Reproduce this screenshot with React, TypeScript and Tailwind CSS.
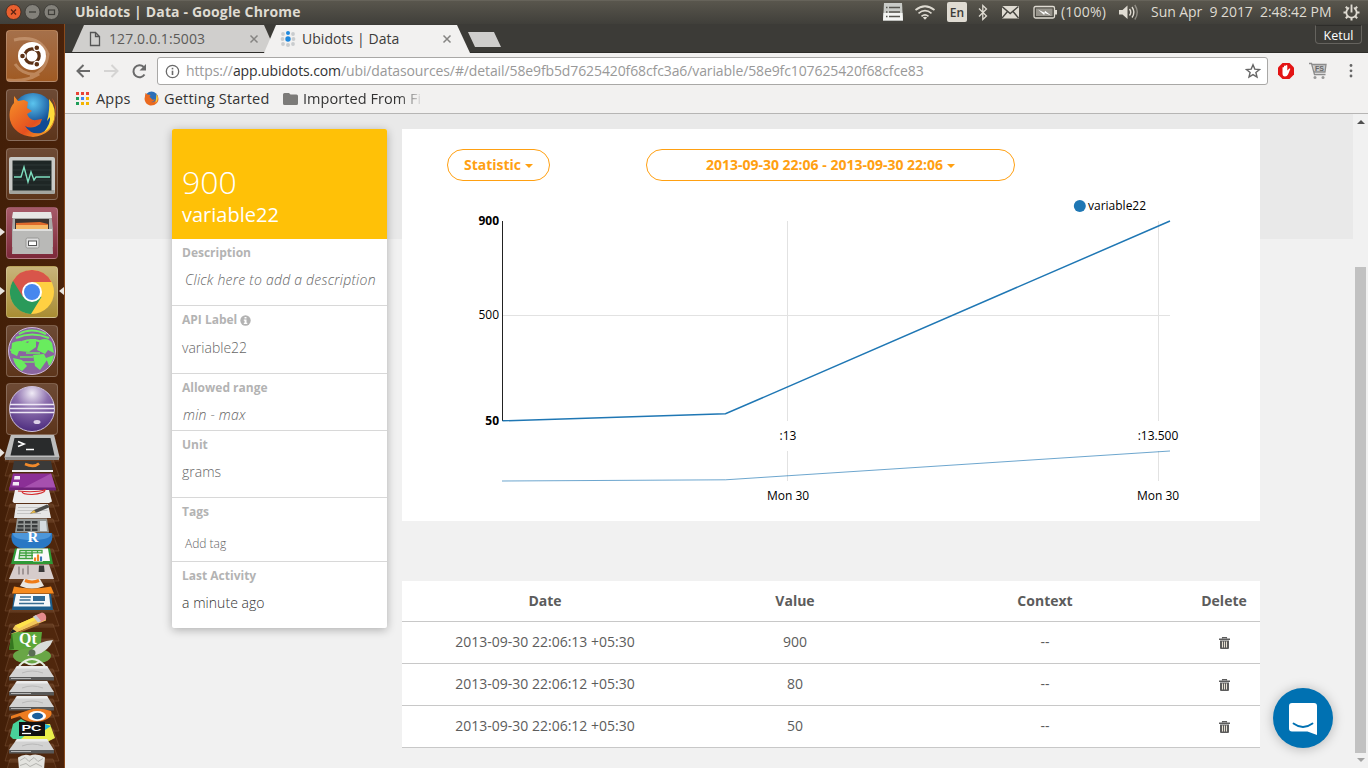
import React from "react";

const UI = "font-['Open_Sans','Noto_Sans',sans-serif]";

/* ---------- top panel ---------- */

function WindowButtons() {
  return (
    <svg className="ml-[5px] h-6 w-[56px] shrink-0" viewBox="0 0 56 24">
      <circle cx="8.5" cy="11" r="7.5" fill="#e9602f" stroke="#3a2a22" strokeWidth=".8" />
      <path d="M6 8.5l5 5M11 8.5l-5 5" stroke="#5b2413" strokeWidth="1.3" />
      <circle cx="27.5" cy="11" r="7.5" fill="#83817a" stroke="#383733" strokeWidth=".8" />
      <path d="M24 11h7" stroke="#3f3e39" strokeWidth="1.3" />
      <circle cx="46.5" cy="11" r="7.5" fill="#83817a" stroke="#383733" strokeWidth=".8" />
      <rect x="43.5" y="9" width="6" height="4.5" fill="none" stroke="#3f3e39" strokeWidth="1.2" />
    </svg>
  );
}

function TopPanel() {
  return (
    <header className="flex h-6 shrink-0 items-center border-t border-[#66635a] bg-linear-to-b from-[#59564d] to-[#403f3a] text-[#dfdbd2]">
      <WindowButtons />
      <div className="ml-[14px] w-[240px] pb-[2px] text-[14px] leading-[20px] font-bold tracking-[0.15px] whitespace-nowrap">
        Ubidots | Data - Google Chrome
      </div>
      <svg className="ml-auto h-6 w-[120px] shrink-0" viewBox="882 0 120 24">
        <path d="M884 2h18l1 17.5h-20z" fill="#c9cbc7" />
        <path d="M883.5 12h19l.5 7.5h-20z" fill="#f4f5f3" />
        <path d="M889 6.500h11M889 11h11M889 15.500h11" stroke="#55544e" strokeWidth="1.3" />
        <path d="M886 6.500h1.5M886 11h1.5M886 15.500h1.5" stroke="#55544e" strokeWidth="1.6" />
        <g fill="none" stroke="#dfdbd2" strokeWidth="1.7">
          <path d="M915.5 9q9.500-7.500 19 0" />
          <path d="M918.5 12.300q6.500-5.200 13 0" />
          <path d="M921.5 15.300q3.500-2.800 7 0" />
        </g>
        <path d="M925 18.800l-2.200-2.300q2.200-1.500 4.400 0z" fill="#dfdbd2" />
        <rect x="947" y="1" width="20" height="20" rx="2" fill="#dfdbd2" />
        <text x="957" y="16" textAnchor="middle" className="fill-[#3c3b37] font-['Open_Sans'] text-[12px] font-semibold">En</text>
        <path d="M979 7.500l7.500 7.500-3.700 3.500v-14l3.700 3.500-7.500 7.500" fill="none" stroke="#dfdbd2" strokeWidth="1.300" />
      </svg>
      <svg className="h-6 w-[58px] shrink-0" viewBox="1002 0 58 24">
        <rect x="1001.5" y="5" width="17.500" height="12.500" fill="#dfdbd2" />
        <path d="M1002 5.500l8.200 7 8.200-7M1002 17l5.500-6.500M1018.500 17l-5.500-6.500" fill="none" stroke="#45443f" strokeWidth="1.400" />
        <rect x="1034" y="5.500" width="20.500" height="11.500" rx="1.500" fill="none" stroke="#dfdbd2" strokeWidth="1.300" />
        <rect x="1036" y="7.500" width="16.500" height="7.500" fill="#96938b" />
        <path d="M1055 9h2v4.500h-2z" fill="#dfdbd2" />
        <path d="M1038 8.500l6.500 3.200.5-2 6 4.800-6.200-2.600-.6 2z" fill="#fff" />
      </svg>
      <div className="w-[58px] pb-[2px] pl-px text-[14px] leading-[20px] tracking-[0.2px] whitespace-nowrap">(100%)</div>
      <svg className="h-6 w-[33px] shrink-0" viewBox="1118 0 33 24">
        <path d="M1119 9h3.500l5-4.500v13.500l-5-4.500h-3.500z" fill="#dfdbd2" />
        <g fill="none" stroke="#dfdbd2" strokeWidth="1.400">
          <path d="M1129.500 8q2.500 3.300 0 6.500" />
          <path d="M1132 6q3.800 5.200 0 10.500" />
          <path d="M1134.800 4q5 7.200 0 14.500" opacity=".45" />
        </g>
      </svg>
      <div className="w-[192px] pb-[2px] text-[14px] leading-[20px] tracking-[-0.05px] whitespace-pre">Sun Apr  9 2017  2:48:42 PM</div>
      <svg className="mr-2 h-6 w-[17px] shrink-0" viewBox="1343 0 17 24">
        <circle cx="1351.500" cy="11.500" r="5.200" fill="none" stroke="#dfdbd2" strokeWidth="1.800" />
        <path d="M1343.500 11.500h2.500M1357 11.500h2.500M1351.500 17v2.500M1345.800 5.800l2 2M1357.200 5.800l-2 2M1345.800 17.200l2-2M1357.200 17.200l-2-2" stroke="#dfdbd2" strokeWidth="2" />
        <path d="M1351.500 3.500v8" stroke="#47453f" strokeWidth="4.500" />
        <path d="M1351.500 3.500v8" stroke="#dfdbd2" strokeWidth="1.900" />
      </svg>
    </header>
  );
}

/* ---------- launcher ---------- */

function Tile({ tone, children, before, after }: { tone: string; children: React.ReactNode; before?: boolean; after?: boolean }) {
  return (
    <div className="relative flex h-[52px] w-[65px] shrink-0 justify-center pr-px">
      <div className={"h-[52px] w-[52px] rounded border border-white/20 bg-linear-to-b " + tone}>
        <svg className="h-[50px] w-[50px]" viewBox="1 1 50 50">{children}</svg>
      </div>
      {before && <span className="absolute top-[21px] left-0 border-y-4 border-l-[5px] border-y-transparent border-l-[#e8e4df]" />}
      {after && <span className="absolute top-[21px] right-px border-y-4 border-r-[5px] border-y-transparent border-r-[#e8e4df]" />}
    </div>
  );
}

function Ghosts() {
  const ys = Array.from({ length: 22 }, (_, i) => 12 + i * 15);
  return (
    <g>
      {ys.map((y) => (
        <g key={y}>
          <path d={`M10 ${y - 2}h43l6 17h-54z`} fill="#5f3517" fillOpacity=".3" stroke="#a07a5c" strokeOpacity=".35" strokeWidth=".8" />
          <path d={`M10 ${y - 2}h43l1.500 4h-46z`} fill="#93694a" fillOpacity=".2" />
        </g>
      ))}
    </g>
  );
}

function Drive({ y }: { y: number }) {
  return (
    <g>
      <path d={`M17 ${y}h30l7 11v3h-45v-3z`} fill="#d2d2d2" />
      <path d={`M9 ${y + 11}h45v3.500h-45z`} fill="#585858" />
      <path d={`M11 ${y + 12.500}h20`} stroke="#b5b5b5" />
      <path d={`M17 ${y}h30l1.500 2.500h-33.500z`} fill="#ebebeb" />
      <path d={`M22 ${y + 7}q10-4 21 0`} fill="none" stroke="#b9b9b9" />
    </g>
  );
}

function FoldedStack() {
  return (
    <svg className="h-[336px] w-[65px] shrink-0" viewBox="0 0 65 336">
      <Ghosts />
      {/* terminal */}
      <g transform="translate(0 -1)">
        <path d="M11 1.500h43l5.500 22.500-1 3h-53l-1-3z" fill="#bdbdbd" />
        <path d="M5 24h54l-1 3h-52z" fill="#8b8b8b" />
        <path d="M14.500 5h36l4 17.500h-44z" fill="#292b2c" />
        <path d="M18 8.500l6 2.500-6 2.500M26 16.500h8" stroke="#fff" strokeWidth="1.600" fill="none" />
      </g>
      <path d="M0 14.500l4.500 4.200L0 23z" fill="#e8e4df" />
      {/* sublime */}
      <g transform="translate(0 -2)">
        <path d="M14 29h37l2 10h-41z" fill="#3b3a39" />
        <path d="M25 32q9 4 14-.5" stroke="#f18a2b" strokeWidth="2.500" fill="none" />
        <path d="M12 38h41v2h-41z" fill="#eee" />
      </g>
      {/* workspaces */}
      <g transform="translate(0 -3)">
        <path d="M13 42.500h38l5 16h-47z" fill="#8b2f96" />
        <path d="M51 42.500l5 16h-36z" fill="#a650ae" />
        <path d="M9 56.500h47v3h-47z" fill="#6f2279" />
        <path d="M14.500 45h5.500v3.500h-6zM13 51h6v3.500h-6.500z" fill="#f4e9f6" />
      </g>
      {/* document viewer */}
      <g transform="translate(0 -3.5)">
        <path d="M15 59.500h34l3 11.500-3 1.500h-35l-1.500-1.500z" fill="#eee" />
        <path d="M18 60.500q18 2 28-1.500M22 61q0 3 10 3 12-1 13-4" stroke="#d42a2c" strokeWidth="1.200" fill="none" />
      </g>
      {/* text editor */}
      <g transform="translate(0 -4.5)">
        <path d="M16 74.500h32l3 14h-37z" fill="#e6e6e6" />
        <path d="M18 78h28M17.500 81h30M17 84h24" stroke="#c5c5c5" />
        <path d="M30 84l4-3.500 13-5.500 3 2.500-13 5.500z" fill="#4c4c49" />
        <path d="M30 84l4-3.500 2 2.500z" fill="#e6b94c" />
      </g>
      {/* calculator */}
      <g transform="translate(0 -4.5)">
        <path d="M17 89h30l2 14h-34z" fill="#969a98" />
        <path d="M18.500 91.500h5v2.500h-5.500zM25 91.500h5.500v2.500h-5.500zM32 91.500h5.500v2.500h-5.500zM17.500 95.500h6v2.500h-6zM25 95.500h5.500v2.500h-5.500zM32 95.500h5.500v2.500h-5.500zM17 99h6.500v2.500h-6.500zM25 99h5.500v2.500h-5.500zM32 99h5.500v2.500h-5.500z" fill="#3a3d3d" />
        <path d="M40 91.500h6l1 10h-7z" fill="#d4dbe0" />
      </g>
      {/* r studio */}
      <path d="M12 99h40q3 16.500-20.500 16.500T12 99z" fill="#2a78c4" />
      <path d="M13 99h38q1 7-19 7t-19-7z" fill="#4d97da" />
      <text x="33" y="108" textAnchor="middle" className="fill-white font-['Liberation_Serif'] text-[15px] font-bold">R</text>
      {/* calc */}
      <g transform="translate(0 -7.5)">
        <path d="M15 122h35l3 15.500h-42z" fill="#2e9a36" />
        <path d="M17 122h31l2 12.500h-36z" fill="#fafafa" />
        <path d="M20 124h22v8h-23zM20 126.500h22M19.500 129h22M26 124v8M32 124v8M37.500 124v8" fill="none" stroke="#3fa13f" strokeWidth="1.300" />
        <path d="M33 127h10v8h-10z" fill="#fff" />
        <path d="M35 131v3.500M38 128v6.500" stroke="#f08424" strokeWidth="2.200" />
        <path d="M41 130v4.500" stroke="#3b76b5" strokeWidth="2.200" />
      </g>
      {/* system settings */}
      <g transform="translate(0 -8.5)">
        <path d="M15 139h34l5 14.500h-45z" fill="#d6cccb" />
        <path d="M19 141v8M23 143v6M28 140v9" stroke="#6b6161" />
        <path d="M39 140h5l.6 6.500h-6z" fill="#393838" />
      </g>
      {/* vlc */}
      <g transform="translate(0 -6.5)">
        <path d="M14 159q18 4 37 0l3 7h-42z" fill="#f58b1f" />
        <path d="M24 151.500h16l4 7q-12 5-24 0z" fill="#e9e5df" />
        <path d="M25 153q7 3 14 0" stroke="#ef7c18" strokeWidth="3" fill="none" />
      </g>
      {/* writer */}
      <g transform="translate(0 -7)">
        <path d="M14 167h37l2 16h-41z" fill="#1d5e8c" />
        <path d="M16 167h33l1.500 12.500h-37z" fill="#f5f8fa" />
        <path d="M20 170h11M19.500 173h11M19 176.500h25" stroke="#3a6d91" strokeWidth="1.300" />
        <path d="M33 169h12v5h-12z" fill="#316a93" />
      </g>
      {/* qt */}
      <path d="M12 198h30l-2 18h-31z" fill="#5ca63a" />
      <path d="M12 198l2 17-5 1z" fill="#35761f" />
      <text x="28" y="209.500" textAnchor="middle" className="fill-white font-['Liberation_Serif'] text-[16px] font-bold">Qt</text>
      {/* pencil */}
      <g transform="translate(0 -5.5)">
        <path d="M9 206l6-9 25-11q6 0 6 6l-27 11z" fill="#f2c75a" />
        <path d="M15 197l25-11 2 2-23 12z" fill="#ffe44b" />
        <path d="M35 187l7-3q5 1 4 7l-6 3z" fill="#e48b8c" />
        <path d="M33 188l3-1.500 5 6-3 1.500z" fill="#c9cbd0" />
        <path d="M9 206l3.500-5.500 4 2.500z" fill="#222" />
        <path d="M19 203l19-8.500 1 2-19 7.500z" fill="#a9702c" />
      </g>
      {/* green pen */}
      <g transform="translate(0 -7)">
        <ellipse cx="32" cy="229" rx="19" ry="8" fill="#69a646" />
        <path d="M19 239q13-14 26 0M25 235q7 5 14 0" stroke="#e6eee2" strokeWidth="2" fill="none" />
        <path d="M27 229l6-7q6-8 20-9-4 11-17 15z" fill="#dadcd8" />
        <circle cx="32" cy="226" r="3.500" fill="#5a6d55" />
      </g>
      <Drive y={232} /><Drive y={247} /><Drive y={262} />
      {/* blender */}
      <g transform="translate(0 -4)">
        <path d="M11 286l18-6q10-3 22 1 3 6-9 10-16 3-22-5l-9 3z" fill="#ee7d21" />
        <ellipse cx="37" cy="286" rx="9" ry="5" fill="#fff" />
        <ellipse cx="37.500" cy="286" rx="5.500" ry="3.200" fill="#1b5e9c" />
      </g>
      {/* pycharm */}
      <g transform="translate(0 -5)">
        <path d="M13 295l8-5 33 18-3 3-38-1-3-3z" fill="#48d39a" />
        <path d="M38 295h12l5 14-8 4-26-3z" fill="#e9ee4b" />
        <path d="M45 295l6 2-6 4z" fill="#22b8e0" />
        <path d="M19 293h26v14h-26z" fill="#111" />
        <text x="21.500" y="301.500" className="fill-white font-['Liberation_Sans'] text-[9px] font-bold" textLength="20" lengthAdjust="spacingAndGlyphs">PC</text>
        <path d="M22 304.500h9" stroke="#fff" strokeWidth="1.300" />
      </g>
      <Drive y={305} />
      {/* trash */}
      <g transform="translate(0 -6.5)">
        <path d="M18 330q6-4 12-2 7-3 15 2l-1 12h-25z" fill="#e3e3df" />
        <path d="M20 333l5-3 4 4 5-4 4 4 5-3M20 338l6-2 4 3 6-3 6 3" fill="none" stroke="#b4b4b0" />
      </g>
    </svg>
  );
}

function Launcher() {
  return (
    <aside className="flex w-[65px] shrink-0 flex-col overflow-hidden border-r border-[#8a4a1c] bg-linear-to-r from-[#431f08] to-[#4a220a] pt-1.5">
      <div className="flex flex-col gap-[7px] [&>*:last-child]:-mt-px">
        <Tile tone="from-[#a5704a] to-[#a05a22]">
          <path d="M8 10q25-6 34 14-2 18-18 22M1 50q20 2 32-6-16 2-24-10" fill="none" stroke="#dfb896" strokeOpacity=".45" strokeWidth="3" />
          <circle cx="26" cy="26" r="14" fill="#fff" />
          <circle cx="26" cy="26" r="7.200" fill="none" stroke="#5b3115" strokeWidth="3.200" />
          <g fill="#5b3115" stroke="#fff" strokeWidth="1.200"><circle cx="16.500" cy="26" r="2.900" /><circle cx="30.800" cy="17.800" r="2.900" /><circle cx="30.800" cy="34.200" r="2.900" /></g>
        </Tile>
        <Tile tone="from-[#6d4a35] to-[#5d351b]">
          <defs>
            <radialGradient id="globe" cx=".5" cy=".25"><stop stopColor="#5bc4ee" /><stop offset="1" stopColor="#114a94" /></radialGradient>
            <linearGradient id="fox" x2="1" y2="1"><stop stopColor="#f79329" /><stop offset=".6" stopColor="#e4501f" /><stop offset="1" stopColor="#f8c02c" /></linearGradient>
          </defs>
          <circle cx="27" cy="25" r="21" fill="url(#globe)" />
          <path d="M8 7l4 5 6-1 4 2-1 6 5 3-5 3q3 7 9 6l6-1-2 5q-8 6-15 2 6 9 16 7 12-4 14-17 2-9-3-18 6 8 3 20-3 17-22 19Q8 46 4 31 2 20 8 14z" fill="url(#fox)" />
          <path d="M43 10q8 9 5 21-3 9-10 12 7-9 6-15l-3 4q3-11 2-22z" fill="#ffdc3a" />
        </Tile>
        <Tile tone="from-[#6d4a35] to-[#5d351b]">
          <rect x="3" y="9" width="46" height="37" rx="2" fill="#c9cac7" /><rect x="3.500" y="42" width="45" height="4" fill="#a3a49f" />
          <rect x="6.500" y="12.500" width="39" height="30" fill="#1e2625" />
          <path d="M7 17h38M7 22h38M7 27h38M7 32h38M7 37h38" stroke="#35403e" strokeWidth=".7" />
          <path d="M8 29h7l3-10 4 15 3-10 3 8 2-3h14" fill="none" stroke="#7fe0c0" strokeWidth="1.400" />
        </Tile>
        <Tile tone="from-[#a65a68] to-[#7c2839]" before>
          <path d="M7 5h38l2 17v18h-41v-18z" fill="#a9a9a7" /><path d="M7 5h38l1 6h-40z" fill="#e6e6e4" />
          <path d="M9 12h34v14h-34z" fill="#3b332f" /><path d="M10 16l24-1 8 2v8h-32z" fill="#df6a2b" /><path d="M10 18h32v6h-32z" fill="#f5b765" />
          <path d="M7 22h39l1 25h-41z" fill="#b9b9b7" /><path d="M7 22h39v2h-39z" fill="#dededc" />
          <rect x="20" y="31" width="13" height="10" rx="1.500" fill="#ddd" stroke="#969694" /><rect x="22.500" y="34" width="8" height="4.500" fill="#fff" stroke="#555" />
        </Tile>
        <Tile tone="from-[#c8b47a] to-[#a98d32]" before after>
          <circle cx="26" cy="26" r="22" fill="#ffd042" />
          <path d="M7 14.800A22 22 0 0 0 25 48l10.500-17L26 26z" fill="#2a9a5a" />
          <path d="M7 14.800A22 22 0 0 1 45.500 16H26v10l-9 5z" fill="#d8554a" />
          <circle cx="26" cy="26" r="10" fill="#fff" /><circle cx="26" cy="26" r="8" fill="#4787ee" />
        </Tile>
        <Tile tone="from-[#6d4a35] to-[#5d351b]">
          <circle cx="26" cy="26" r="23.500" fill="#8a65a0" stroke="#cfb9dc" />
          <path d="M13 9q12-7 27 0M10 13q16-7 33 0M16 17q10-4 20 0" stroke="#6dee62" strokeWidth="2" fill="none" />
          <path d="M6 18q8-4 16 0l2-4h6v8l-7 5-10-1-2 5-6-3zM34 15q8-3 12 3l2 10-6-3-3 4-8-4zM7 33l9 2 5 6-5 5q-7-4-9-13zM27 30l11-1 3 6-7 10-5-4zM40 33l8-3q-1 7-5 11z" fill="#69ec5e" />
          <path d="M4 25h9M20 28h14M16 37h12M14 32h13" stroke="#69ec5e" strokeWidth="1.500" />
        </Tile>
        <Tile tone="from-[#6d4a35] to-[#5d351b]">
          <defs><radialGradient id="orb" cx=".5" cy=".15" r=".9"><stop stopColor="#f0ebf6" /><stop offset=".4" stopColor="#8d70ae" /><stop offset="1" stopColor="#462579" /></radialGradient></defs>
          <circle cx="26" cy="26" r="22.500" fill="url(#orb)" stroke="#cfc2dd" />
          <path d="M4 21.500h44M4 25.500h44M4 29.500h44" stroke="#eee8f5" strokeWidth="1.300" />
          <ellipse cx="31" cy="39" rx="3.500" ry="2" fill="#dcd0e8" />
        </Tile>
      </div>
      <div className="-mt-px flex"><FoldedStack /></div>
    </aside>
  );
}

/* ---------- browser chrome ---------- */

function TabStrip() {
  return (
    <div className="flex h-[29px] shrink-0 items-end border-b border-[#2e2d2a] bg-[#3c3b37] pl-[7px]">
      <div className="flex h-[27px] w-[204px] items-center bg-[#d0cfcd] pr-4 pl-[17px] text-[#5c5b59] [clip-path:polygon(12px_0,192px_0,204px_100%,0_100%)]">
        <svg className="h-4 w-3" viewBox="0 0 12 16"><path d="M1.500 1.500h5l4 4v9h-9zM6.500 1.500v4h4" fill="none" stroke="#555" strokeWidth="1.300" /></svg>
        <span className="ml-[8px] text-[14px] tracking-[0.1px]">127.0.0.1:5003</span>
        <svg className="mr-px ml-auto h-2.5 w-2.5" viewBox="0 0 10 10"><path d="M1.500 1.500l7 7M8.500 1.500l-7 7" stroke="#858482" strokeWidth="1.500" /></svg>
      </div>
      <div className="-mb-px -ml-[12px] flex h-[28px] w-[206px] items-center bg-[#f2f1f0] pr-4 pl-[16px] text-[#3c3b39] [clip-path:polygon(12px_0,193px_0,206px_100%,0_100%)]">
        <svg className="h-4 w-4" viewBox="0 0 16 16">
          <g fill="#c9ccce"><circle cx="3" cy="3" r="1.900" /><circle cx="13" cy="3" r="1.900" /><circle cx="2.500" cy="8" r="1.900" /><circle cx="13.500" cy="8" r="1.900" /><circle cx="3" cy="13" r="1.900" /><circle cx="8" cy="14" r="2" /><circle cx="13" cy="13" r="1.900" /></g>
          <circle cx="8" cy="2" r="2" fill="#1e88dd" /><circle cx="8" cy="8" r="2.700" fill="#1e88dd" />
        </svg>
        <span className="ml-[6px] pb-px text-[14px] tracking-[0.05px]">Ubidots | Data</span>
        <svg className="mr-[2px] ml-auto h-2.5 w-2.5" viewBox="0 0 10 10"><path d="M1.500 1.500l7 7M8.500 1.500l-7 7" stroke="#858482" strokeWidth="1.500" /></svg>
      </div>
      <div className="mb-[5px] -ml-[2px] h-[15px] w-[33px] bg-[#cfcecc] [clip-path:polygon(0_0,26px_0,100%_100%,7px_100%)]" />
      <div className="mr-[6px] mb-[8px] ml-auto flex h-[19px] w-[47px] items-center justify-center rounded-b border border-t-[#2e2d2a] border-[#65635e] pt-[2px] text-white">
        <span className="text-[12.5px] leading-4">Ketul</span>
      </div>
    </div>
  );
}

function AddressBar() {
  return (
    <div className="flex h-[36px] shrink-0 items-center bg-[#f2f1f0] pl-[10px]">
      <svg className="h-5 w-[82px] shrink-0" viewBox="75 61 82 20">
        <path d="M90 71H78M83.500 65l-6 6 6 6" fill="none" stroke="#6a6a6a" strokeWidth="2" />
        <path d="M104 71h12M111.500 65l6 6-6 6" fill="none" stroke="#d5d4d3" strokeWidth="2" />
        <path d="M144.500 74.500a6 6 0 1 1-.8-7.500" fill="none" stroke="#6a6a6a" strokeWidth="2" />
        <path d="M146 64v6.500h-6.500z" fill="#6a6a6a" />
      </svg>
      <div className="flex h-[28px] w-[1111px] items-center rounded-[3px] border border-[#a9a8a6] bg-white pr-[6px] pl-[7px]">
        <svg className="h-[15px] w-[15px]" viewBox="0 0 15 15"><circle cx="7.500" cy="7.500" r="6.200" fill="none" stroke="#6a6a6a" strokeWidth="1.300" /><path d="M7.500 6.700v4.300" stroke="#6a6a6a" strokeWidth="1.600" /><path d="M7.500 3.800v1.600" stroke="#6a6a6a" strokeWidth="1.600" /></svg>
        <span className="ml-[6px] pb-[2px] text-[14px] tracking-[-0.11px] whitespace-nowrap text-[#999]">
          https://<span className="text-[#333]">app.ubidots.com</span>/ubi/datasources/#/detail/58e9fb5d7625420f68cfc3a6/variable/58e9fc107625420f68cfce83
        </span>
        <svg className="ml-auto h-[16px] w-[16px]" viewBox="0 0 16 16"><path d="M8 1.800l1.800 4.300 4.700.4-3.600 3 1.100 4.600-4-2.500-4 2.500 1.100-4.600-3.600-3 4.700-.4z" fill="none" stroke="#666" strokeWidth="1.400" /></svg>
      </div>
      <svg className="ml-[9px] h-[18px] w-[18px]" viewBox="0 0 18 18">
        <path d="M5.500 1h7l4.500 4.500v7l-4.500 4.500h-7L1 12.500v-7z" fill="#e31414" />
        <path d="M5.500 9V5.500q.8-1 1.500 0V4q.8-1 1.600 0v-.6q.9-.9 1.700 0v5.100l2-2q1.200-.4 1 .6l-2.300 5.400q-1 2-3 2-2.500 0-2.500-3z" fill="#fff" />
      </svg>
      <svg className="ml-[14px] h-[18px] w-[18px]" viewBox="0 0 18 18">
        <path d="M4 2h13l-1 8H5z" fill="#c9c9c9" />
        <path d="M0 1.500h2.500l3 11h11M3 2.500h14l-1 7.500H5" fill="none" stroke="#8c8c8c" strokeWidth="1.300" />
        <text x="6" y="9" className="fill-[#666] font-['Liberation_Sans'] text-[7px] font-bold">FS</text>
        <circle cx="6" cy="15.500" r="1.500" fill="#999" /><circle cx="14" cy="15.500" r="1.500" fill="#999" />
      </svg>
      <svg className="ml-[22px] h-4 w-1" viewBox="0 0 4 16"><g fill="#666"><circle cx="2" cy="2.500" r="1.400" /><circle cx="2" cy="7.800" r="1.400" /><circle cx="2" cy="13" r="1.400" /></g></svg>
    </div>
  );
}

function Bookmarks() {
  const dots = ["#e94435", "#e94435", "#e94435", "#1f9d58", "#4285f4", "#f4b400", "#1f9d58", "#f4b400", "#f4b400"];
  return (
    <div className="flex h-[25px] shrink-0 items-center border-b border-[#b6b5b4] bg-[#f2f1f0] pb-[5px] pl-[11px] text-[14.5px] leading-5 tracking-[0.2px] text-[#333]">
      <div className="grid w-[13px] grid-cols-3 gap-[2px]">
        {dots.map((c, i) => <span key={i} className="h-[3px] w-[3px]" style={{ backgroundColor: c }} />)}
      </div>
      <span className="ml-[7px] w-[48px]">Apps</span>
      <svg className="h-[15px] w-[15px]" viewBox="0 0 15 15"><circle cx="7.500" cy="7" r="6.500" fill="#2b6fb8" /><path d="M1.500 2l2 1.500 3 .5-1 2 1.500 1q1 3 4 1-1 3-4 3 5 1 6-5V3.500q3 5 0 8.500-3 3-7 2.500Q1 13 .5 8z" fill="#ea6a20" /><path d="M12.500 3q2.500 4 0 8l-1 1z" fill="#f9d23c" /></svg>
      <span className="ml-[5px] w-[119px] whitespace-nowrap">Getting Started</span>
      <svg className="h-3 w-[15px]" viewBox="0 0 15 12"><path d="M1.500 0h4.500l1.500 1.500h6q1.500 0 1.500 1.500v7.500q0 1.500-1.500 1.500h-12q-1.500 0-1.500-1.500v-9q0-1.500 1.500-1.500z" fill="#7c7b79" /></svg>
      <span className="ml-[5px] w-[126px] tracking-[0.05px] [mask-image:linear-gradient(to_right,#000_96px,transparent_120px)] whitespace-nowrap">Imported From Fi</span>
    </div>
  );
}

/* ---------- dashboard ---------- */

const LABEL = "block text-[12px] leading-4 font-bold text-[#b3b3b3]";
const VALUE = "block text-[14px] leading-5 font-light";

function VariableCard() {
  return (
    <section className="flex h-[499px] w-[215px] shrink-0 flex-col rounded-[2px] bg-white text-[#666] shadow-[0_2px_10px_rgba(0,0,0,0.28)] *:pl-[10px]">
      <div className="flex h-[110px] flex-col rounded-t-[2px] bg-[#ffc107] pt-[32px] text-white">
        <span className="h-[41px] text-[32px] leading-[42px] font-light">900</span>
        <span className="text-[20px] leading-[26px]">variable22</span>
      </div>
      <div className="h-[67px] border-b border-[#d8d8d8] pt-[6px]">
        <span className={LABEL}>Description</span>
        <span className={VALUE + " mt-[9px] ml-[3px] tracking-[0.23px] whitespace-nowrap italic"}>Click here to add a description</span>
      </div>
      <div className="h-[68px] border-b border-[#d8d8d8] pt-[6px]">
        <div className="flex items-center gap-[3px]">
          <span className={LABEL}>API Label</span>
          <svg className="h-[11px] w-[11px]" viewBox="0 0 11 11"><circle cx="5.500" cy="5.500" r="5.200" fill="#b3b3b3" /><path d="M4.500 2h2v1.500h-2zM3.800 4.600h2.700v3.200h.8V9H3.800V7.800h.8v-2h-.8z" fill="#fff" /></svg>
        </div>
        <span className={VALUE + " mt-[10px]"}>variable22</span>
      </div>
      <div className="h-[57px] border-b border-[#d8d8d8] pt-[6px]">
        <span className={LABEL}>Allowed range</span>
        <span className={VALUE + " mt-[9px] ml-px tracking-[0.2px] italic"}>min - max</span>
      </div>
      <div className="h-[67px] border-b border-[#d8d8d8] pt-[6px]">
        <span className={LABEL}>Unit</span>
        <span className={VALUE + " mt-[9px]"}>grams</span>
      </div>
      <div className="h-[64px] border-b border-[#d8d8d8] pt-[6px]">
        <span className={LABEL}>Tags</span>
        <span className="mt-[14px] ml-[3px] block text-[12px] leading-5 font-light">Add tag</span>
      </div>
      <div className="h-[66px] pt-[6px] text-[#333]">
        <span className={LABEL}>Last Activity</span>
        <span className={VALUE + " mt-[9px] tracking-[0.05px]"}>a minute ago</span>
      </div>
    </section>
  );
}

function Pill({ className, children }: { className: string; children: React.ReactNode }) {
  return (
    <button className={"flex h-8 items-center justify-center gap-1 rounded-full border border-[#ffa012] pb-[2px] text-[14px] font-bold whitespace-nowrap text-[#ffa012] " + className}>
      {children}
      <span className="mt-[3px] border-x-4 border-t-4 border-x-transparent border-t-[#ffa012]" />
    </button>
  );
}

function Chart() {
  return (
    <svg className="h-[331px] w-[858px]" viewBox="402 190 858 331">
      <path d="M503 315.500h667M787.500 221v200M1158.500 221v200M787.500 451v30M1158.500 451v30" stroke="#e2e2e2" shapeRendering="crispEdges" />
      <path d="M502.500 221v200" stroke="#222" shapeRendering="crispEdges" />
      <path d="M502.500 420.800L725.500 413.800 1170 221" fill="none" stroke="#1f77b4" strokeWidth="1.500" />
      <path d="M502 481L725.500 479.800 1170 451" fill="none" stroke="#1f77b4" strokeOpacity=".65" strokeWidth="1" />
      <circle cx="1079.800" cy="206" r="6" fill="#1f77b4" />
      <g className="fill-black font-['Open_Sans'] text-[12px]">
        <text x="1088" y="210">variable22</text>
        <g textAnchor="end">
          <text x="499" y="225" className="font-bold">900</text>
          <text x="499" y="319">500</text>
          <text x="499" y="425" className="font-bold">50</text>
        </g>
        <g textAnchor="middle">
          <text x="788" y="440">:13</text>
          <text x="1158" y="440">:13.500</text>
          <text x="788" y="500">Mon 30</text>
          <text x="1158" y="500">Mon 30</text>
        </g>
      </g>
    </svg>
  );
}

function TrashIcon() {
  return (
    <svg className="mt-[2px] h-3 w-[11px]" viewBox="0 0 11 12">
      <path d="M3.500 1.500V.6h4v.9" fill="none" stroke="#5c5c5c" strokeWidth="1.100" />
      <path d="M0 1.500h11v1.500H0zM1 3.500h9v7.500q0 1-1 1H2q-1 0-1-1z" fill="#5c5c5c" />
      <path d="M3.500 4.500v6M5.500 4.500v6M7.500 4.500v6" stroke="#e8e2d4" strokeWidth="1" />
    </svg>
  );
}

const COLS = "grid grid-cols-[286px_214px_286px_72px] items-center justify-items-center border-b border-[#c8c8c8] pb-[2px] text-[14px]";
const ROWS = [
  { date: "2013-09-30 22:06:13 +05:30", value: 900 },
  { date: "2013-09-30 22:06:12 +05:30", value: 80 },
  { date: "2013-09-30 22:06:12 +05:30", value: 50 },
];

function ValuesTable() {
  return (
    <div className="bg-white text-[#5c5c5c]">
      <div className={COLS + " h-[41px] font-bold"}>
        <span>Date</span><span>Value</span><span>Context</span><span>Delete</span>
      </div>
      {ROWS.map((r, i) => (
        <div key={i} className={COLS + " h-[42px]"}>
          <span>{r.date}</span><span>{r.value}</span><span>--</span><TrashIcon />
        </div>
      ))}
    </div>
  );
}

function Scrollbar() {
  return (
    <div className="flex w-[15px] shrink-0 flex-col items-center bg-[#f1f1f1]">
      <span className="mt-[6px] border-x-[4px] border-b-[4px] border-x-transparent border-b-[#505050]" />
      <span className="mt-[143px] h-[486px] w-[11px] bg-[#c1c1c1]" />
      <span className="mt-[5px] border-x-[4px] border-t-[4px] border-x-transparent border-t-[#a3a3a3]" />
    </div>
  );
}

export default function App() {
  return (
    <div className={"relative flex h-[768px] w-[1368px] flex-col overflow-hidden " + UI}>
      <TopPanel />
      <div className="flex min-h-0 flex-1">
        <Launcher />
        <div className="flex min-w-0 flex-1 flex-col">
          <TabStrip />
          <AddressBar />
          <Bookmarks />
          <div className="flex min-h-0 flex-1">
            <main className="flex flex-1 items-start gap-[15px] bg-[linear-gradient(#e9e9e9_125px,#f1f1f1_125px)] pt-[15px] pl-[107px]">
              <VariableCard />
              <div className="flex w-[858px] flex-col gap-[60px]">
                <section className="h-[392px] bg-white pt-5">
                  <div className="mb-[9px] flex gap-[96px] pl-[45px]">
                    <Pill className="w-[103px]">Statistic</Pill>
                    <Pill className="w-[369px]">2013-09-30 22:06 - 2013-09-30 22:06</Pill>
                  </div>
                  <Chart />
                </section>
                <ValuesTable />
              </div>
            </main>
            <Scrollbar />
          </div>
        </div>
      </div>
      <button className="absolute right-[35px] bottom-[20px] flex h-[60px] w-[60px] items-center justify-center rounded-full bg-[#0071b2] shadow-[0_1px_12px_rgba(0,0,0,0.25)]">
        <svg className="mt-[2px] h-8 w-7" viewBox="0 0 28 32">
          <path d="M3 0h22q3 0 3 3v29l-9.500-3.500H3q-3 0-3-3V3q0-3 3-3z" fill="#fff" />
          <path d="M4.500 20.500q9.500 7 19 0" fill="none" stroke="#0071b2" strokeWidth="1.800" strokeLinecap="round" />
        </svg>
      </button>
    </div>
  );
}
